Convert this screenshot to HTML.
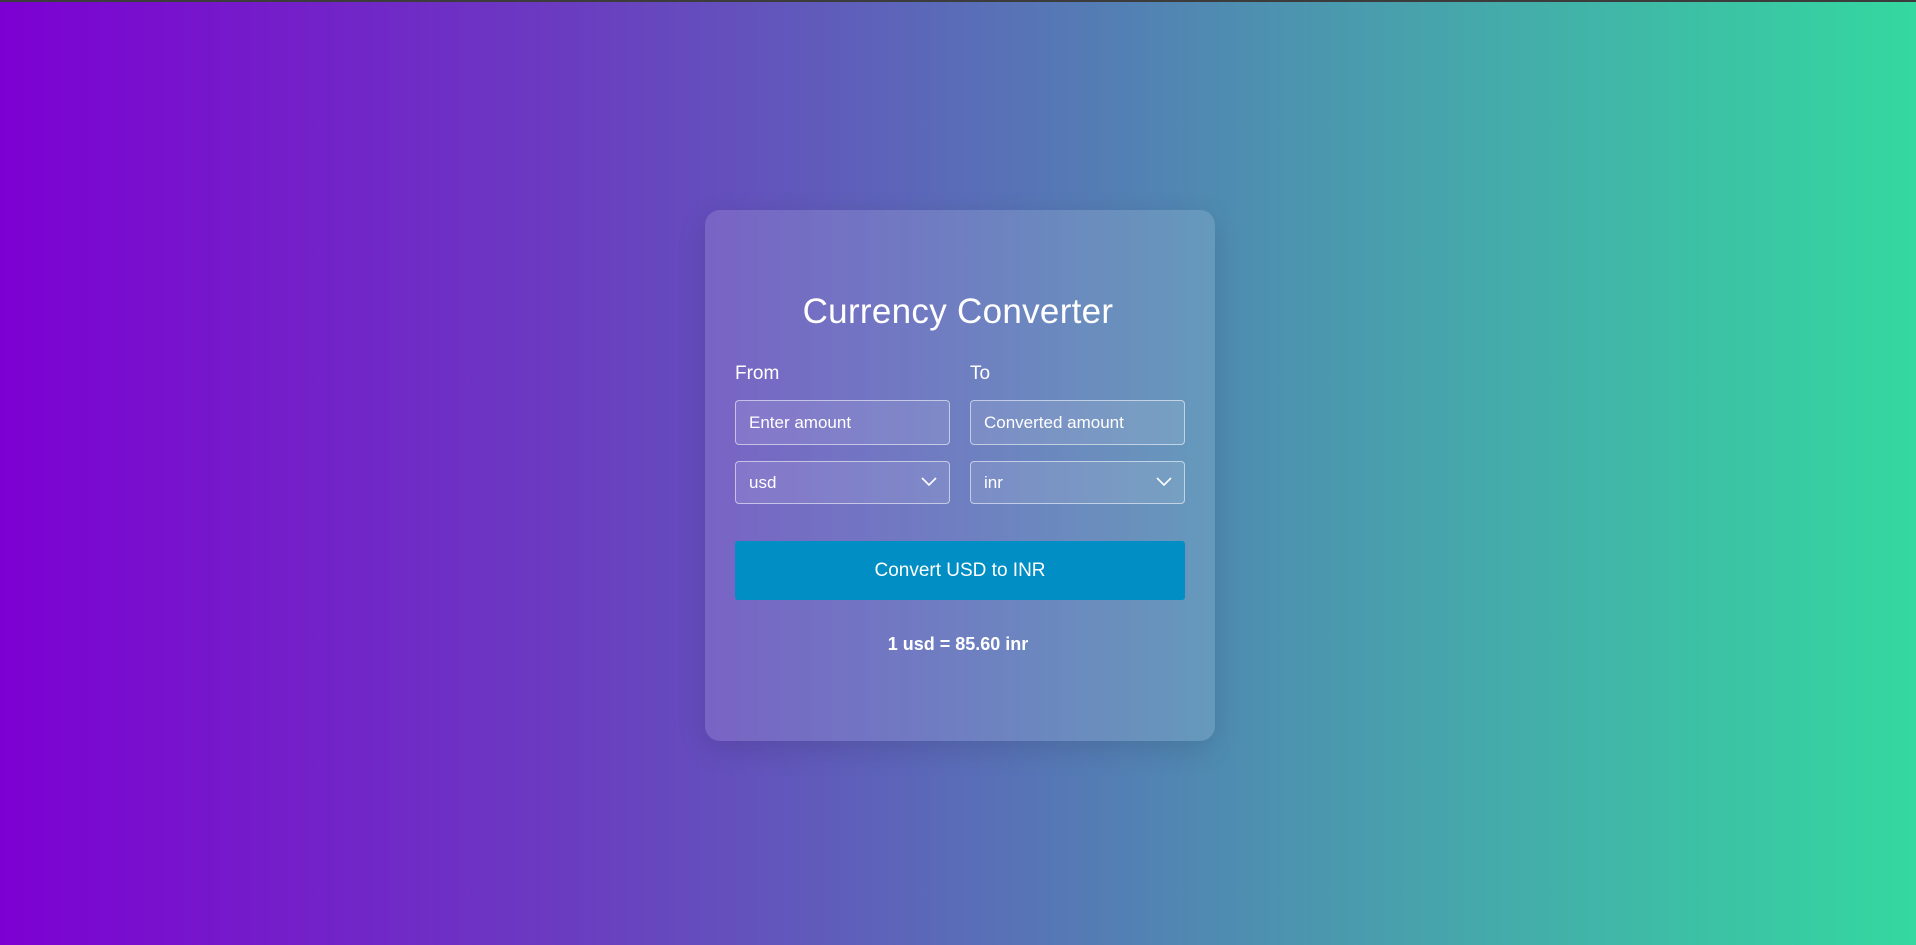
<!DOCTYPE html>
<html><head><style>
*{box-sizing:border-box;margin:0;padding:0}
html,body{width:1916px;height:945px;overflow:hidden}
body{background:linear-gradient(90deg,#7d00d3 0%,#6a3dc0 30%,#5a6cb8 50%,#4a9aae 70%,#34d8a0 100%);font-family:"Liberation Sans",sans-serif;color:#fff;position:relative;border-top:2px solid #3c3c3c}
.card{position:absolute;left:705px;top:208px;width:510px;height:531px;border-radius:15px;background:rgba(255,255,255,0.13);box-shadow:0 8px 30px rgba(0,0,0,0.12)}
h1{position:absolute;left:0;width:100%;top:290px;text-align:center;font-weight:normal;font-size:35px;letter-spacing:0.3px}
.lbl{position:absolute;top:361px;font-size:19px}
.box{position:absolute;width:215px;border:1px solid rgba(255,255,255,0.55);border-radius:4px;background:rgba(255,255,255,0.1);font-size:17px;padding-left:13px;display:flex;align-items:center}
.in{top:398px;height:45px}
.sel{top:459px;height:43px}
.sel svg{position:absolute;right:12px;top:15px}
.btn{position:absolute;left:735px;top:539px;width:450px;height:59px;background:#008ec4;border-radius:3px;font-size:19px;display:flex;align-items:center;justify-content:center}
.res{position:absolute;left:0;width:100%;top:632px;text-align:center;font-size:18px;font-weight:600}
</style></head><body>
<div class="card"></div>
<h1>Currency Converter</h1>
<div class="lbl" style="left:735px">From</div>
<div class="lbl" style="left:970px">To</div>
<div class="box in" style="left:735px">Enter amount</div>
<div class="box in" style="left:970px">Converted amount</div>
<div class="box sel" style="left:735px">usd<svg width="16" height="10" viewBox="0 0 16 10"><path d="M1 1l7 7 7-7" fill="none" stroke="#fff" stroke-width="1.6"/></svg></div>
<div class="box sel" style="left:970px">inr<svg width="16" height="10" viewBox="0 0 16 10"><path d="M1 1l7 7 7-7" fill="none" stroke="#fff" stroke-width="1.6"/></svg></div>
<div class="btn">Convert USD to INR</div>
<div class="res">1 usd = 85.60 inr</div>
</body></html>
